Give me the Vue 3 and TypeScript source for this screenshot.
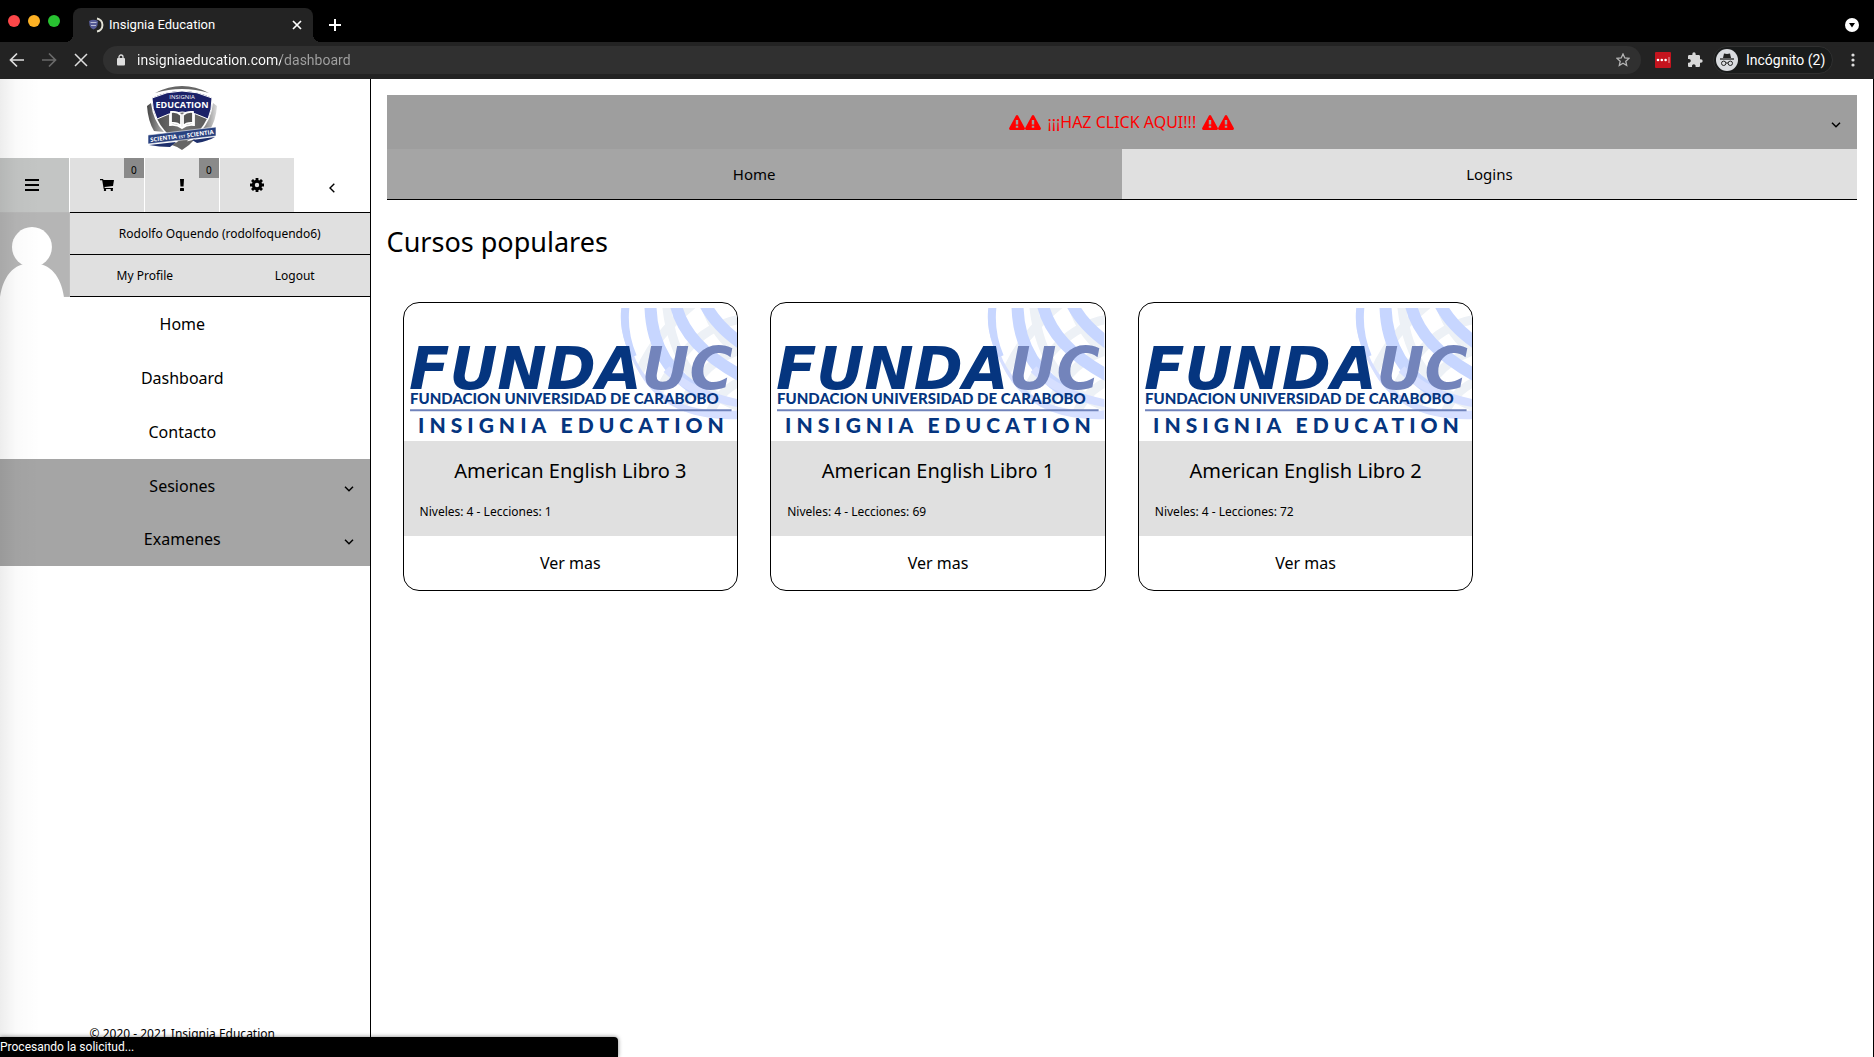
<script setup lang="ts">
import { ref } from 'vue'

interface Course {
  title: string
  levels: number
  lessons: number
}

const url = ref<string>('insigniaeducation.com/dashboard')
const links: string[] = ['Home', 'Dashboard', 'Contacto']
const groups: string[] = ['Sesiones', 'Examenes']
const courses: Course[] = [
  { title: 'American English Libro 3', levels: 4, lessons: 1 },
  { title: 'American English Libro 1', levels: 4, lessons: 69 },
  { title: 'American English Libro 2', levels: 4, lessons: 72 },
]
</script>

<template>
  <div class="browser">
    <header class="chrome">
      <div class="tabstrip">
        <div class="lights">
          <span class="light red"></span>
          <span class="light amber"></span>
          <span class="light green"></span>
        </div>
        <div class="tab">
          <svg class="favicon" viewBox="0 0 16 16" aria-hidden="true">
            <path d="M1 4q4.500-2.500 9 0l-.6 4.500q-.8 3-3.900 4Q2.400 11.500 1.600 8.500z" fill="#555a94" />
            <path d="M2.500 5.500h6M3 8.500h5" stroke="#b9bbd2" fill="none" />
            <path d="M9 1.500a6.600 6.600 0 0 1 0 13" fill="none" stroke="#e2e2d6" stroke-width="2" />
          </svg>
          <span class="tab-title">Insignia Education</span>
          <button class="plain" aria-label="Cerrar">
            <svg width="10" height="10" viewBox="0 0 10 10"><path d="M1 1l8 8M9 1l-8 8" stroke="#fff" stroke-width="1.700" /></svg>
          </button>
        </div>
        <button class="plain new-tab" aria-label="Nueva">
          <svg width="12" height="12" viewBox="0 0 12 12"><path d="M6 0v12M0 6h12" stroke="#fff" stroke-width="2" /></svg>
        </button>
        <button class="plain search-tabs" aria-label="Buscar">
          <svg width="14" height="14" viewBox="0 0 14 14"><circle cx="7" cy="7" r="7" fill="#fff" /><path d="M4 5h6L7 9.500z" fill="#000" /></svg>
        </button>
      </div>
      <div class="toolbar">
        <div class="nav-buttons">
          <button class="plain" aria-label="Atrás">
            <svg width="16" height="16" viewBox="0 0 16 16" fill="none" stroke="#dedede" stroke-width="1.700"><path d="M15 8H2M8 1.500L1.500 8 8 14.500" /></svg>
          </button>
          <button class="plain" aria-label="Adelante">
            <svg width="16" height="16" viewBox="0 0 16 16" fill="none" stroke="#6a6a6a" stroke-width="1.700"><path d="M1 8h13M8 1.500L14.500 8 8 14.500" /></svg>
          </button>
          <button class="plain" aria-label="Detener">
            <svg width="14" height="14" viewBox="0 0 14 14" fill="none" stroke="#dedede" stroke-width="1.500"><path d="M1 1l12 12M13 1L1 13" /></svg>
          </button>
        </div>
        <div class="address">
          <svg width="10" height="12" viewBox="0 0 10 12"><rect x="1" y="4" width="8" height="7.500" rx="1" fill="#dedede" /><path d="M3 5V3a2 2 0 0 1 4 0v2" fill="none" stroke="#dedede" stroke-width="1.300" /></svg>
          <input v-model="url" class="url" type="text" aria-label="URL" />
          <button class="plain" aria-label="Favorito">
            <svg width="14" height="14" viewBox="0 0 14 14"><path d="M7 1l1.800 4 4.200.4-3.200 2.900.9 4.200L7 10.300l-3.700 2.200.9-4.200L1 5.400 5.200 5z" fill="none" stroke="#b5b5b5" stroke-width="1.300" /></svg>
          </button>
        </div>
        <button class="plain extension" aria-label="Extensión">
          <svg width="16" height="16" viewBox="0 0 16 16"><rect width="16" height="16" rx="1" fill="#c4141e" /><circle cx="3" cy="8" r="1.300" fill="#fff" /><circle cx="6.800" cy="8" r="1.300" fill="#fff" /><circle cx="10.600" cy="8" r="1.300" fill="#fff" /><path d="M14 5v6" stroke="#e9a0a4" /></svg>
        </button>
        <button class="plain puzzle" aria-label="Extensiones">
          <svg width="16" height="16" viewBox="0 0 24 24"><path d="M21 11h-1.500V6.500c0-1.100-.9-2-2-2H13V3a2.500 2.500 0 0 0-5 0v1.500H3.500c-1.100 0-2 .9-2 2v4H3c1.500 0 2.700 1.200 2.700 2.700S4.500 16 3 16H1.500v4.500c0 1.100.9 2 2 2h4V21c0-1.500 1.200-2.700 2.700-2.700s2.700 1.200 2.700 2.700v1.500h4.600c1.100 0 2-.9 2-2V16H21a2.500 2.500 0 0 0 0-5z" fill="#d8d8d8" /></svg>
        </button>
        <div class="incognito">
          <svg width="22" height="22" viewBox="0 0 22 22"><circle cx="11" cy="11" r="11" fill="#dadce0" /><path d="M7 9l1-4.500q3 .8 6 0L15 9z" fill="#222" /><path d="M4 10h14" stroke="#222" stroke-width="1.300" /><circle cx="7.700" cy="14.300" r="2.200" fill="none" stroke="#222" /><circle cx="14.300" cy="14.300" r="2.200" fill="none" stroke="#222" /><path d="M9.900 14h2.200" stroke="#222" /></svg>
          <span>Incógnito (2)</span>
        </div>
        <button class="plain dots" aria-label="Menú">
          <svg width="4" height="14" viewBox="0 0 4 14" fill="#dedede"><circle cx="2" cy="2" r="1.600" /><circle cx="2" cy="7" r="1.600" /><circle cx="2" cy="12" r="1.600" /></svg>
        </button>
      </div>
    </header>

    <div class="page">
      <aside class="sidebar">
        <a class="logo" href="#" aria-label="Insignia Education">
          <svg width="72" height="66" viewBox="0 0 72 66">
            <defs>
              <linearGradient id="steel" x1="0" x2="1"><stop offset="0" stop-color="#4a4a4a" /><stop offset=".5" stop-color="#777" /><stop offset="1" stop-color="#555" /></linearGradient>
              <linearGradient id="edgeL" x1="0" x2="1"><stop offset="0" stop-color="#444" /><stop offset="1" stop-color="#b5b5b5" /></linearGradient>
              <linearGradient id="edgeR" x1="0" x2="1"><stop offset="0" stop-color="#666" /><stop offset=".6" stop-color="#aaa" /><stop offset="1" stop-color="#ddd" /></linearGradient>
            </defs>
            <path d="M9 8Q36-6 63 8 36 0 9 8z" fill="#666" />
            <path d="M1 21l4-3q2 18 13 29l-10-1Q2 36 1 21z" fill="url(#edgeL)" />
            <path d="M71 21l-4-3q-2 18-13 29l9-1Q70 36 71 21z" fill="url(#edgeR)" />
            <path d="M6 13Q36-1 66 13 64 44 36 59 8 44 6 13z" fill="url(#steel)" />
            <path d="M6 13Q36-1 66 13q0 12-4 21Q36 20 11 34 6 24 6 13z" fill="#1b2168" stroke="#fff" />
            <text x="36" y="14" class="shield-thin">INSIGNIA</text>
            <text x="36" y="23" class="shield-name">EDUCATION</text>
            <path d="M25 27q6-1 10 3v11q-4-4-10-3zM47 27q-6-1-10 3v11q4-4 10-3z" fill="#555" stroke="#fff" stroke-width="1.800" />
            <path d="M24 29v11q7-1 12 3 5-4 12-3V29" fill="none" stroke="#fff" stroke-width="1.800" />
            <path d="M23 59q7 0 13-5 6 5 14-1-6 7-14 12-6-4-13-6z" fill="#666" />
            <path d="M2 50L70 42v9L2 59z" fill="#28417f" stroke="#fff" stroke-width=".6" />
            <path d="M3 60l27-3-6 5Q13 62 3 60zM69 52l-23 3 5 3q11-2 18-6z" fill="#1d2f6b" />
            <text x="36" y="53" class="shield-motto" transform="rotate(-7 36 52)">SCIENTIA <tspan class="shield-est">EST</tspan> SCIENTIA</text>
          </svg>
        </a>

        <div class="tools">
          <button class="tool active" aria-label="Lista">
            <svg width="14" height="12" viewBox="0 0 14 12"><path d="M0 1h14M0 6h14M0 11h14" stroke="#000" stroke-width="2" /></svg>
          </button>
          <button class="tool" aria-label="Carrito">
            <svg width="14" height="12" viewBox="0 0 14 12"><path d="M0 0h3l.5 1H14l-1 6-8.500 1 .2 1H13v1H3.700L2.200 1.300H0z" /><circle cx="5" cy="11" r="1.200" /><circle cx="11.800" cy="11" r="1.200" /></svg>
            <span class="badge">0</span>
          </button>
          <button class="tool" aria-label="Avisos">
            <svg width="6" height="12" viewBox="0 0 6 12"><path d="M1 0h4l-.5 7.500h-3z" /><rect x="1" y="9" width="4" height="3" rx=".5" /></svg>
            <span class="badge">0</span>
          </button>
          <button class="tool" aria-label="Ajustes">
            <svg width="14" height="14" viewBox="0 0 14 14"><circle cx="7" cy="7" r="3.700" fill="none" stroke="#000" stroke-width="3" /><path d="M7 0v2.500M7 11.500V14M0 7h2.500M11.500 7H14M2 2l1.800 1.800M10.200 10.200L12 12M12 2l-1.800 1.800M3.800 10.200L2 12" stroke="#000" stroke-width="2.800" /></svg>
          </button>
          <button class="tool collapse" aria-label="Contraer">
            <svg width="6" height="10" viewBox="0 0 6 10" fill="none" stroke="#000" stroke-width="1.400"><path d="M5.300.7L1 5l4.300 4.300" /></svg>
          </button>
        </div>

        <div class="user">
          <svg class="avatar" viewBox="0 0 75 85" aria-hidden="true"><rect width="75" height="85" fill="#b5b5b5" /><path d="M5 85C8 65 18 51 37 51s29 14 32 34z" fill="#fff" /><circle cx="37" cy="35" r="20" fill="#fff" /></svg>
          <div class="user-rows">
            <div class="user-row">Rodolfo Oquendo (rodolfoquendo6)</div>
            <div class="user-row two"><a href="#">My Profile</a><a href="#">Logout</a></div>
          </div>
        </div>

        <nav class="menu">
          <a v-for="l in links" :key="l" class="item" href="#">{{ l }}</a>
          <button v-for="g in groups" :key="g" class="item group">
            {{ g }}
            <svg class="chevron" viewBox="0 0 10 6"><path d="M1 .7l4 4 4-4" /></svg>
          </button>
        </nav>
        <footer class="copyright">© 2020 - 2021 Insignia Education</footer>
      </aside>

      <main class="content">
        <button class="alert">
          <span class="alert-text">
            <span class="warnings"><svg v-for="n in 2" :key="n" viewBox="0 0 16 15"><path fill-rule="evenodd" d="M7 .6q1-1.200 2 0l6.800 12.400q.5 1.500-1 2H1.200q-1.500-.5-1-2zM6.800 5v4.500h2.400V5zM6.800 10.700v2h2.400v-2z" /></svg></span>
            ¡¡¡HAZ CLICK AQUI!!!
            <span class="warnings"><svg v-for="n in 2" :key="n" viewBox="0 0 16 15"><path fill-rule="evenodd" d="M7 .6q1-1.200 2 0l6.800 12.400q.5 1.500-1 2H1.200q-1.500-.5-1-2zM6.800 5v4.500h2.400V5zM6.800 10.700v2h2.400v-2z" /></svg></span>
          </span>
          <svg class="chevron" viewBox="0 0 10 6"><path d="M1 .7l4 4 4-4" /></svg>
        </button>
        <div class="tabs">
          <button class="page-tab selected">Home</button>
          <button class="page-tab">Logins</button>
        </div>
        <h1>Cursos populares</h1>
        <section class="courses">
          <article v-for="c in courses" :key="c.title" class="card">
            <svg class="cover" viewBox="0 0 333 138" role="img" aria-label="Fundauc">
              <defs><clipPath id="globe"><path d="M217 5H333V116Q262 118 235 70 213 34 217 5z" /></clipPath></defs>
              <g clip-path="url(#globe)" fill="none">
                <g stroke="#edf1f6" stroke-width="9">
                  <path d="M345 15Q275 20 240 125M345 45Q290 55 270 125M290 0Q240 40 228 90M345 75Q310 85 300 125" />
                  <path d="M262 0Q270 90 350 108M300 0Q312 40 345 55" />
                </g>
                <path d="M218 0Q212 62 258 96 290 118 345 111" stroke="#d6dfff" stroke-width="10" />
                <g stroke="#c7d6ff">
                  <path d="M221 0Q217 28 228 54" stroke-width="9" />
                  <path d="M246 0Q246 62 300 92" stroke-width="12" />
                  <path d="M271 0Q280 45 345 77" stroke-width="12" />
                  <path d="M300 0Q312 25 345 46" stroke-width="12" />
                </g>
                <path d="M262 66Q290 94 345 102" stroke="#d6dfff" stroke-width="8" />
              </g>
              <text x="5" y="86" class="brand">FUNDA<tspan fill="#7384bb">UC</tspan></text>
              <text x="6" y="101" class="brand-sub">FUNDACION UNIVERSIDAD DE CARABOBO</text>
              <path d="M6 107H327" stroke="#7083bb" stroke-width="2" />
              <text x="14" y="130" class="brand-school">INSIGNIA EDUCATION</text>
            </svg>
            <div class="info">
              <h2>{{ c.title }}</h2>
              <p>Niveles: {{ c.levels }} - Lecciones: {{ c.lessons }}</p>
            </div>
            <a class="more" href="#">Ver mas</a>
          </article>
        </section>
      </main>
    </div>
    <div class="status">Procesando la solicitud...</div>
  </div>
</template>

<style>
body {
  margin: 0;
  overflow: hidden;
}
</style>

<style scoped>
* {
  box-sizing: border-box;
}
.browser {
  position: relative;
  display: flex;
  flex-direction: column;
  min-height: 100vh;
  overflow: hidden;
  background: #fff;
  color: #000;
  font-family: "Noto Sans", sans-serif;
  font-size: 16px;
}
svg {
  display: block;
  flex: none;
}
button {
  border: 0;
  padding: 0;
  background: none;
  color: inherit;
  font: inherit;
}
a {
  color: inherit;
  text-decoration: none;
}
.chrome {
  font-family: Roboto, sans-serif;
  font-size: 13px;
  color: #fff;
}
.plain {
  display: flex;
  align-items: center;
  justify-content: center;
}
.tabstrip {
  display: flex;
  height: 42px;
  padding: 8px 15px 0 8px;
  background: #000;
}
.lights {
  display: flex;
  gap: 8px;
  width: 65px;
  padding-top: 7px;
}
.light {
  width: 12px;
  height: 12px;
  border-radius: 50%;
}
.red { background: #fc4749; }
.amber { background: #fdb124; }
.green { background: #28c231; }
.tab {
  position: relative;
  display: flex;
  align-items: center;
  width: 240px;
  padding: 0 11px 0 15px;
  border-radius: 8px 8px 0 0;
  background: #232323;
}
.tab::before,
.tab::after {
  content: "";
  position: absolute;
  bottom: 0;
  width: 8px;
  height: 8px;
}
.tab::before {
  right: 100%;
  background: radial-gradient(circle at 0 0, #000 8px, #232323 8px);
}
.tab::after {
  left: 100%;
  background: radial-gradient(circle at 100% 0, #000 8px, #232323 8px);
}
.favicon {
  width: 16px;
  height: 16px;
}
.tab-title {
  flex: 1;
  padding: 0 0 2px 5px;
}
.new-tab {
  width: 44px;
}
.search-tabs {
  margin-left: auto;
}
.toolbar {
  display: flex;
  align-items: center;
  height: 37px;
  padding: 0 19px 1px 0;
  background: #232323;
}
.nav-buttons {
  display: flex;
  gap: 16px;
  width: 103px;
  padding-left: 9px;
}
.nav-buttons .plain {
  width: 16px;
}
.address {
  display: flex;
  flex: 1;
  align-items: center;
  height: 28px;
  padding: 0 11px 0 13px;
  border-radius: 14px;
  background: #303030;
}
.url {
  flex: 1;
  margin-left: 11px;
  padding: 0;
  border: 0;
  outline: 0;
  background: linear-gradient(to right, #fff 144px, #a2a2a2 144px);
  background-clip: text;
  -webkit-background-clip: text;
  color: transparent;
  font: 14px/20px Roboto, sans-serif;
}
.extension { margin-left: 14px; }
.puzzle { margin-left: 16px; }
.incognito {
  display: flex;
  align-items: center;
  gap: 8px;
  width: 120px;
  height: 28px;
  margin: 0 18px 0 10px;
  padding-left: 2px;
  border: 1px solid #303030;
  border-radius: 14px;
  background: #191b1b;
  font-size: 14px;
}
.page {
  position: relative;
  display: flex;
  flex: 1;
  margin-left: -5px;
  border-right: 1px solid #000;
}
.page::before {
  content: "";
  position: absolute;
  inset: 0 auto 0 5px;
  width: 40px;
  background: linear-gradient(to right, rgba(0, 0, 0, 0.07), rgba(0, 0, 0, 0.02) 40%, transparent);
  pointer-events: none;
  z-index: 1;
}
.sidebar {
  display: flex;
  flex-direction: column;
  width: 20%;
  border-right: 1px solid #000;
}
.logo {
  display: flex;
  justify-content: center;
  padding: 6px 0 7px;
}
.shield-thin,
.shield-name,
.shield-motto {
  fill: #fff;
  font-family: "Open Sans", sans-serif;
  text-anchor: middle;
}
.shield-thin { font-size: 6px; }
.shield-name { font-size: 9px; font-weight: 700; }
.shield-motto { font-size: 6px; font-weight: 700; }
.shield-est { font-size: 4px; }
.tools {
  display: grid;
  grid-template-columns: repeat(5, 1fr);
  height: 54px;
}
.tool {
  position: relative;
  display: flex;
  align-items: center;
  justify-content: center;
  border-right: 1px solid #fff;
  background: #e0e0e0;
}
.tool.active { background: #c3c5c4; }
.tool.collapse {
  padding-top: 5px;
  background: #fff;
}
.badge {
  position: absolute;
  top: 0;
  right: 0;
  width: 20px;
  height: 20px;
  background: #8a8a8a;
  font-size: 10px;
  line-height: 24px;
}
.user {
  display: grid;
  grid-template-columns: 1fr 4fr;
  height: 85px;
}
.avatar {
  width: 100%;
  height: 100%;
}
.user-rows {
  display: flex;
  flex-direction: column;
  border-top: 1px solid #000;
}
.user-row {
  display: grid;
  flex: 1;
  place-items: center;
  border-bottom: 1px solid #000;
  background: #e0e0e0;
  font-size: 12px;
}
.two { grid-template-columns: 1fr 1fr; }
.menu {
  display: flex;
  flex-direction: column;
}
.item {
  position: relative;
  line-height: 54px;
  text-align: center;
}
.group {
  height: 53px;
  background: #a5a5a5;
}
.group:last-child { height: 54px; }
.chevron {
  position: absolute;
  top: 50%;
  right: 16px;
  width: 10px;
  height: 6px;
  fill: none;
  stroke: #000;
  stroke-width: 1.5px;
}
.copyright {
  margin-top: auto;
  padding-bottom: 14px;
  font-size: 12px;
  line-height: 18px;
  text-align: center;
}
.content {
  flex: 1;
  padding: 16px;
}
.alert {
  position: relative;
  display: block;
  width: 100%;
  height: 54px;
  background: #9e9e9e;
  color: #f00;
}
.alert-text {
  display: flex;
  align-items: center;
  justify-content: center;
  gap: 6px;
}
.warnings { display: flex; }
.warnings svg {
  width: 16px;
  height: 15px;
  fill: #f00;
}
.tabs {
  display: flex;
  border-bottom: 1px solid #000;
}
.page-tab {
  flex: 1;
  height: 50px;
  background: #e0e0e0;
  font-size: 15px;
}
.selected { background: #a5a5a5; }
h1,
h2,
p {
  margin: 0;
  font-weight: 400;
}
h1 {
  padding: 22px 0 24px;
  font-size: 27px;
  line-height: 40px;
}
.courses {
  display: grid;
  grid-template-columns: repeat(4, 1fr);
}
.card {
  margin: 16px;
  overflow: hidden;
  border: 1px solid #000;
  border-radius: 16px;
}
.cover { width: 100%; }
.brand {
  fill: #05357f;
  font: italic 700 59px "DejaVu Sans", sans-serif;
}
.brand-sub {
  fill: #05357f;
  font: 900 15px Lato, sans-serif;
}
.brand-school {
  fill: #05357f;
  font: 900 21px Lato, sans-serif;
  letter-spacing: 5px;
}
.info {
  height: 95px;
  padding: 16px;
  background: #e0e0e0;
}
.info h2 {
  font-size: 20px;
  line-height: 28px;
  text-align: center;
}
.info p {
  padding-top: 18px;
  font-size: 12px;
  line-height: 18px;
}
.more {
  display: block;
  line-height: 54px;
  text-align: center;
}
.status {
  position: absolute;
  bottom: 0;
  left: 0;
  z-index: 2;
  width: 33%;
  height: 20px;
  border-radius: 0 4px 0 0;
  background: #000;
  box-shadow: 0 0 4px rgba(0, 0, 0, 0.5);
  color: #fff;
  font: 12px/20px Roboto, sans-serif;
}
</style>
